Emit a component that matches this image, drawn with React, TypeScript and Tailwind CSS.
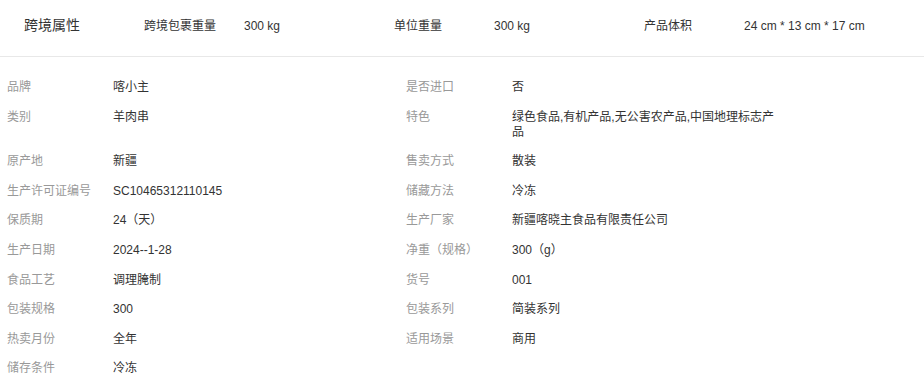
import React from "react";

const left: [string, string][] = [
  ["品牌", "喀小主"],
  ["类别", "羊肉串"],
  ["原产地", "新疆"],
  ["生产许可证编号", "SC10465312110145"],
  ["保质期", "24（天）"],
  ["生产日期", "2024--1-28"],
  ["食品工艺", "调理腌制"],
  ["包装规格", "300"],
  ["热卖月份", "全年"],
  ["储存条件", "冷冻"],
];

const right: [string, string][] = [
  ["是否进口", "否"],
  ["特色", "绿色食品,有机产品,无公害农产品,中国地理标志产品"],
  ["售卖方式", "散装"],
  ["储藏方法", "冷冻"],
  ["生产厂家", "新疆喀晓主食品有限责任公司"],
  ["净重（规格）", "300（g）"],
  ["货号", "001"],
  ["包装系列", "简装系列"],
  ["适用场景", "商用"],
];

const headerItems: [string, string][] = [
  ["跨境包裹重量", "300 kg"],
  ["单位重量", "300 kg"],
  ["产品体积", "24 cm * 13 cm * 17 cm"],
];

export default function App() {
  const rows = left.map((l, i) => [l, right[i]] as const);
  return (
    <div
      className="w-[924px] h-[382px] bg-white overflow-hidden text-[#333]"
      style={{ fontFamily: '"Liberation Sans", "Noto Sans CJK SC", sans-serif' }}
    >
      <div className="h-[57px] border-b border-[#e8e8e8] flex items-start pt-[15px]">
        <div className="w-[144px] pl-[24px] text-[14px] leading-[20px] text-[#333]">跨境属性</div>
        {headerItems.map(([k, v]) => (
          <div key={k} className="w-[250px] flex text-[12px] leading-[20px] pt-[1px] text-[#333]">
            <div className="w-[100px]">{k}</div>
            <div>{v}</div>
          </div>
        ))}
      </div>
      <div className="grid grid-cols-[399px_1fr] gap-y-[14.6px] pl-[7px] pt-[23px] text-[12px] leading-[15px]">
        {rows.map(([l, r], i) => (
          <React.Fragment key={i}>
            <div className="flex">
              <div className="w-[106px] shrink-0 text-[#999]">{l[0]}</div>
              <div className="w-[280px] text-[#333]">{l[1]}</div>
            </div>
            <div className="flex">
              {r ? (
                <>
                  <div className="w-[106px] shrink-0 text-[#999]">{r[0]}</div>
                  <div className="w-[268px] text-[#333]">{r[1]}</div>
                </>
              ) : null}
            </div>
          </React.Fragment>
        ))}
      </div>
    </div>
  );
}
